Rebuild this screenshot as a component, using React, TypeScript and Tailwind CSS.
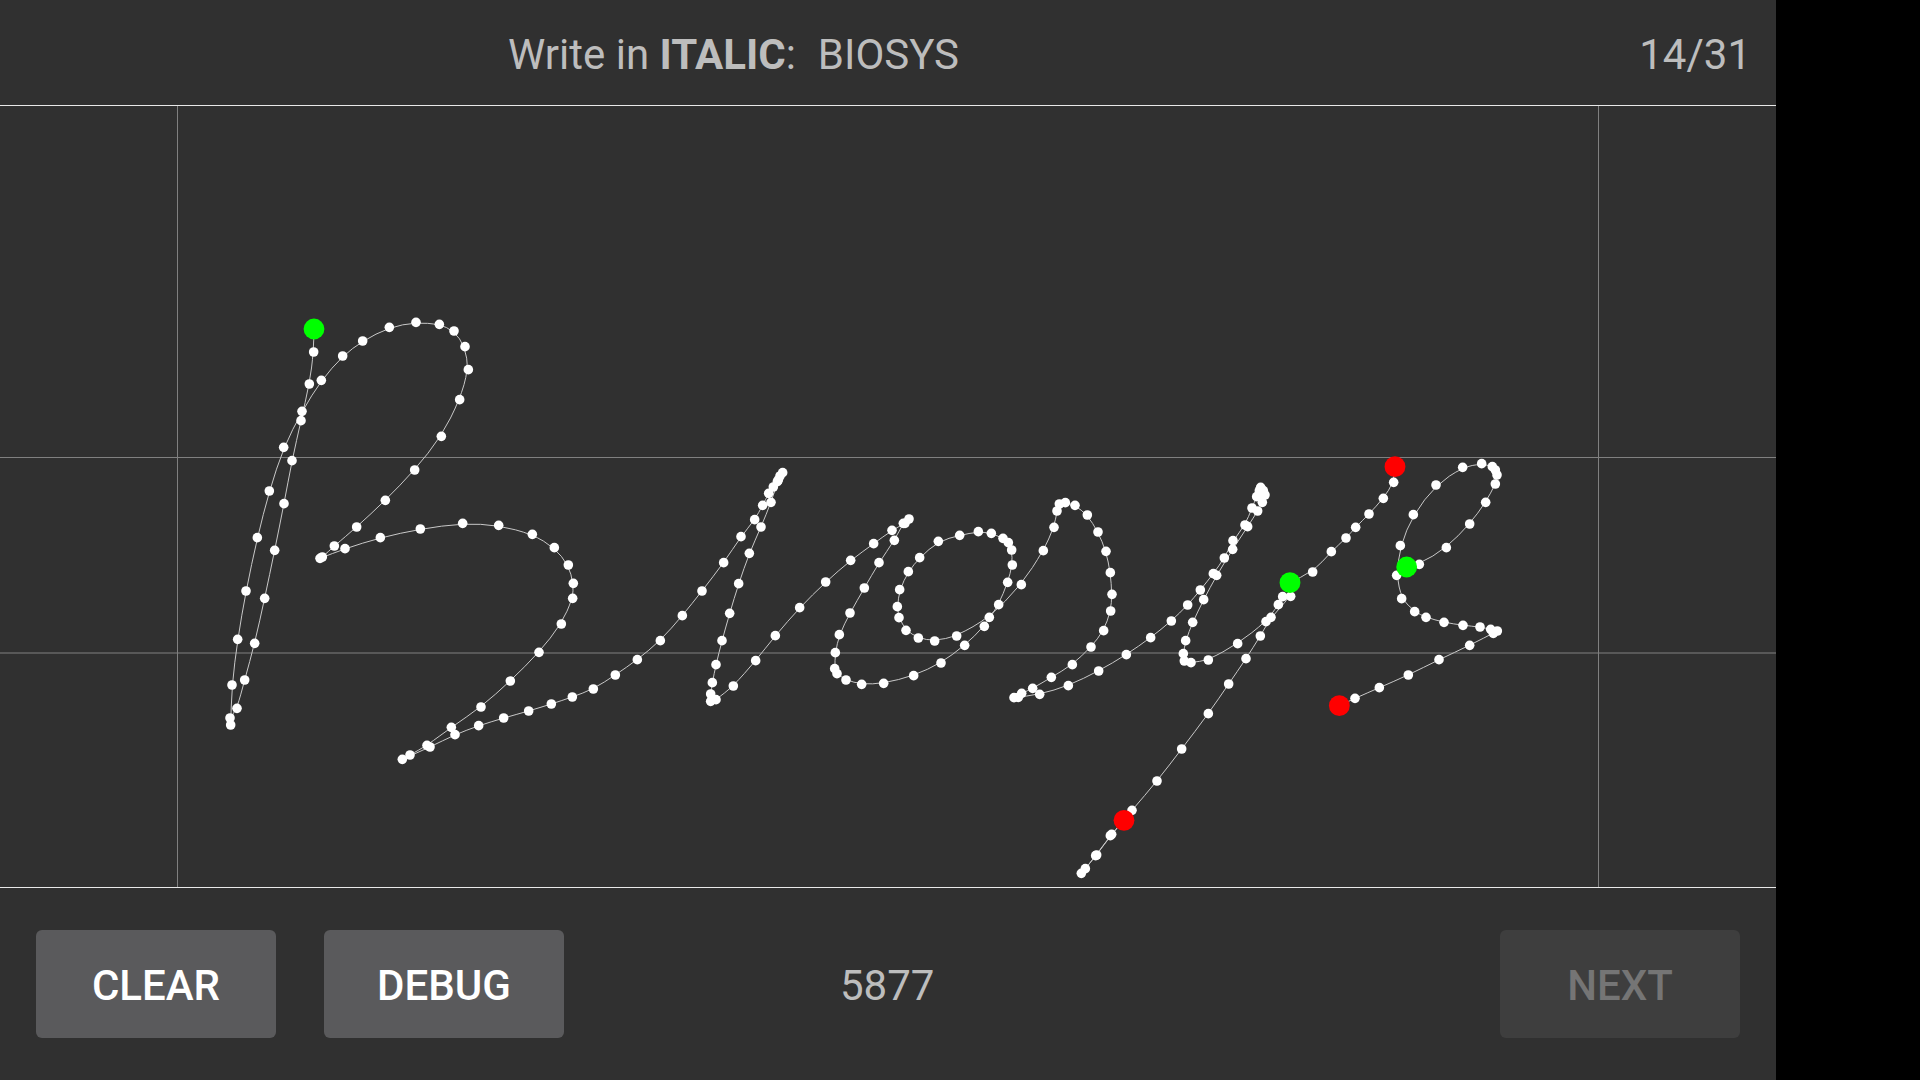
type Run = [number, number, string];

// points read off the sample, [crop x, crop y, "x,y ..." at 3x]
const strokeRuns: Run[][] = [
  [
    [200, 300, "342,87 341,156 328,252 303,362 276,482 252,611 224,751 194,895"],
    [200, 500, "164,430 134,540 111,625 90,654 92,675 96,555 113,418 138,273 172,113"],
    [200, 300, "208,573 251,442 306,334 364,241 428,168 488,123 568,82 648,67 718,73 762,93 795,140 805,209 779,299 724,409 644,510 556,601 470,681 403,738 367,771 360,775 435,746 541,713 661,687 788,670 896,676 997,703 1063,743 1105,795 1120,850"],
    [200, 500, "1118,295 1084,372 1017,457 931,543 843,621 754,682 681,736 630,765 607,778 690,741 765,704 836,677 911,654 986,633 1054,612 1117,591 1180,567 1246,525 1312,479"],
    [380, 450, "841,572 907,497 966,423 1031,338 1083,260 1124,209 1148,166 1166,130 1180,111 1192,95 1200,78 1208,68 1195,90 1173,157 1143,231 1108,310 1076,401 1049,490 1026,572 1008,644 997,698 992,732 992,754 1008,749 1060,708 1127,632 1186,557 1259,473"],
    [800, 480, "77,306 152,241 221,191 276,151 315,130 327,117 310,130 283,181 237,248 193,324 150,399 118,464 106,518 104,566 111,581 138,600 185,613 251,610 341,587 423,549 494,496 553,439 596,374 623,307 637,255 635,210 625,188 609,175 574,160 535,155 479,166 415,184 359,233 325,275 299,329 292,380 297,413 318,451 355,474 404,483 470,468 568,412 664,314 730,212 762,142 771,93 778,72 796,68 825,76 862,105 894,156 918,214 931,278 936,343 932,393 911,452 873,501 817,554 754,592 698,625 665,640 655,652 642,653 719,643 805,617 896,573 979,524 1052,473 1114,423 1163,375"],
    [1000, 470, "601,360 640,311 673,264 699,212 735,165 756,114 770,80 778,62 782,52 790,62 795,75 785,72 787,97 773,123 743,170 698,238 650,316 611,389 578,457 557,512 550,551 553,573 573,578 625,570 713,521 798,455 835,404 848,380 872,379 813,442 781,498 738,566 686,642"],
    [1060, 640, "445,221 365,327 291,423 216,511 151,587 107,647 76,686 64,700 110,645 155,583 192,541"],
  ],
  [[1240, 450, "150,398 218,366 274,305 318,264 347,232 387,192 430,145 461,97 465,50"]],
  [[1240, 450, "500,351 538,343 619,293 689,222 737,157 766,102 771,75 766,60 757,50 725,41 668,52 588,105 520,194 481,287 470,376 485,446 524,485 558,502 612,517 669,526 720,531 752,538 760,550 772,543 689,586 597,629 505,675 418,713 345,745 298,767"]],
];

const strokes = strokeRuns.map((runs) =>
  runs.flatMap(([ox, oy, list]) =>
    list.split(" ").map((pair) => {
      const [x, y] = pair.split(",").map(Number);
      return [ox + x / 3, oy + y / 3];
    })
  )
);

function smoothPath(pts: number[][]) {
  let d = `M${pts[0][0]} ${pts[0][1]}`;
  for (let i = 1; i < pts.length - 1; i++) {
    const mx = (pts[i][0] + pts[i + 1][0]) / 2;
    const my = (pts[i][1] + pts[i + 1][1]) / 2;
    d += ` Q${pts[i][0]} ${pts[i][1]} ${mx} ${my}`;
  }
  const last = pts[pts.length - 1];
  return d + ` L${last[0]} ${last[1]}`;
}

function Canvas() {
  return (
    <svg viewBox="0 106 1776 781" className="block w-full h-[781px]">
      <line x1="0" x2="1776" y1="457.5" y2="457.5" stroke="#808080" />
      <line x1="0" x2="1776" y1="653" y2="653" stroke="#808080" />
      <line x1="177.5" x2="177.5" y1="106" y2="887" stroke="#808080" />
      <line x1="1598.5" x2="1598.5" y1="106" y2="887" stroke="#808080" />
      {strokes.map((pts, i) => (
        <path key={i} d={smoothPath(pts)} fill="none" stroke="#c8c8c8" strokeWidth="1" />
      ))}
      {strokes.map((pts, i) =>
        pts.slice(1, -1).map((p, j) => <circle key={`${i}-${j}`} cx={p[0]} cy={p[1]} r="4.8" fill="#ffffff" />)
      )}
      {strokes.map((pts, i) => (
        <g key={i}>
          <circle cx={pts[pts.length - 1][0]} cy={pts[pts.length - 1][1]} r="10.4" fill="#ff0000" />
          <circle cx={pts[0][0]} cy={pts[0][1]} r="10.4" fill="#00ff00" />
        </g>
      ))}
    </svg>
  );
}

export default function App() {
  return (
    <div className="h-screen w-full bg-black font-['Roboto',sans-serif] overflow-hidden">
      <div className="w-[1776px] h-full bg-[#303030] flex flex-col">
        <header className="h-[106px] shrink-0 border-b border-[#e8e8e8] flex items-center justify-between pl-[508px] pr-[25px] text-[42px] text-[#bdbdbd] pt-[4px]">
          <div className="whitespace-pre">
            Write in <b className="font-bold">ITALIC</b>:{"  "}<span className="ml-[1px]">BIOSYS</span>
          </div>
          <div>14/31</div>
        </header>
        <Canvas />
        <footer className="flex-1 border-t border-[#e8e8e8] flex items-center px-[36px] pb-[1px]">
          <button className="w-[240px] h-[108px] rounded-[6px] bg-[#5a5a5c] text-white text-[42px] font-medium pt-[3px]">CLEAR</button>
          <button className="w-[240px] h-[108px] rounded-[6px] bg-[#5a5a5c] text-white text-[42px] font-medium ml-[48px] pt-[3px]">DEBUG</button>
          <div className="ml-[276px] text-[42px] text-[#bdbdbd] pt-[3px]">5877</div>
          <button className="ml-auto w-[240px] h-[108px] rounded-[6px] bg-[#3e3e3e] text-[#757575] text-[42px] font-medium pt-[3px]">NEXT</button>
        </footer>
      </div>
    </div>
  );
}
